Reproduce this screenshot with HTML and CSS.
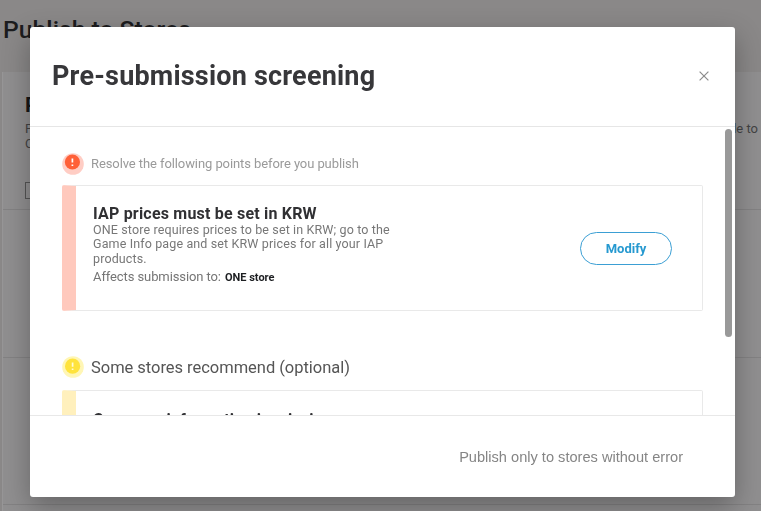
FILE: index.html
```html
<!DOCTYPE html>
<html lang="en">
<head>
<meta charset="utf-8">
<title>Publish to Stores</title>
<link rel="stylesheet" href="styles.css">
</head>
<body>
<main class="page">
  <h1 class="page-title">Publish to Stores</h1>
  <div class="panel">
    <section class="intro">
      <h2>Publish</h2>
      <div class="intro-copy"><span>Publish<br>Choose</span><span>le to</span></div>
      <span class="checkbox"></span>
    </section>
    <section class="row"></section>
    <section class="row"></section>
    <section class="row last"></section>
  </div>
</main>
<div class="modal" role="dialog" aria-label="Pre-submission screening">
  <header class="modal-header">
    <h2 class="modal-title"><span>Pre-submission screening</span></h2>
    <svg class="close" viewBox="0 0 10 10"><path d="M.6.6l8.8 8.8M9.4.6L.6 9.4"/></svg>
  </header>
  <div class="modal-body">
    <div class="content">
      <div class="notice">
        <svg class="status" viewBox="0 0 22 22"><circle class="halo-error" cx="11" cy="11" r="10.8"/><circle class="dot-error" cx="10.4" cy="9" r="7.6"/><path class="mark" d="M10.4 5.4v4.2M10.4 11.4v1.5"/></svg>
        <span class="notice-error">Resolve the following points before you publish</span>
      </div>
      <article class="card card-error">
        <div class="card-text">
          <h3><span>IAP prices must be set in KRW</span></h3>
          <p class="details">ONE store requires prices to be set in KRW; go to the<br>Game Info page and set KRW prices for all your IAP<br>products.</p>
          <p class="affects"><span>Affects submission to:</span><b>ONE store</b></p>
        </div>
        <button class="modify">Modify</button>
      </article>
      <div class="notice">
        <svg class="status" viewBox="0 0 22 22"><circle class="halo-warning" cx="11" cy="11" r="10.8"/><circle class="dot-warning" cx="10.6" cy="10.2" r="7.6"/><path class="mark soft" d="M10.6 6.6v4.2M10.6 12.6v1.5"/></svg>
        <span class="notice-warning">Some stores recommend (optional)</span>
      </div>
      <article class="card card-warning">
        <div class="card-text"><h3><span>Company information is missing</span></h3></div>
      </article>
    </div>
    <div class="scrollbar"></div>
  </div>
  <footer class="modal-footer"><span>Publish only to stores without error</span></footer>
</div>
</body>
</html>
```

FILE: styles.css
```css
* { box-sizing: border-box; }
body, h1, h2, h3, p { margin: 0; }
body {
  height: 511px;
  overflow: hidden;
  background: #8a8888;
  font-family: Roboto, sans-serif;
  color: #757575;
}
.page { padding: 13px 0 0 2px; }
.page-title {
  height: 59px;
  padding-left: 1px;
  font-size: 24.7px;
  line-height: 33px;
  font-weight: 500;
  color: #1c1c1e;
  white-space: nowrap;
}
.panel { background: #908f90; border-left: 1px solid #979697; }
.intro {
  height: 138px;
  padding: 20px 3px 0 22px;
  border-bottom: 1px solid #838283;
}
.intro h2 {
  font-size: 21px;
  line-height: 26px;
  font-weight: 700;
  color: #171719;
}
.intro-copy {
  display: flex;
  justify-content: space-between;
  margin-top: 3px;
  font-size: 13px;
  line-height: 15px;
  color: #434344;
}
.checkbox {
  display: block;
  width: 16px;
  height: 17px;
  margin-top: 31px;
  border: 1px solid #555;
}
.row { height: 147.5px; border-bottom: 1px solid #838283; }
.row.last { height: 8px; }

.modal {
  position: fixed;
  left: 30px;
  top: 27px;
  width: 705px;
  height: 470px;
  display: flex;
  flex-direction: column;
  border-radius: 3px;
  background: #fff;
  box-shadow: 0 10px 28px rgba(0, 0, 0, .3);
}
.modal-header {
  height: 100px;
  display: flex;
  align-items: center;
  justify-content: space-between;
  padding: 0 26px 1px 22px;
  border-bottom: 1px solid #e6e6e6;
}
.modal-title {
  font-size: 27px;
  line-height: 32px;
  font-weight: 700;
  letter-spacing: .2px;
  color: #37373a;
}
.close {
  width: 10px;
  height: 10px;
  fill: none;
  stroke: #8c8c8c;
  stroke-width: 1.2;
}
.modal-body {
  height: 289px;
  display: flex;
  justify-content: space-between;
  padding: 2px 3px 0 32px;
  overflow: hidden;
  border-bottom: 1px solid #e8e8e8;
}
.content { width: 641px; padding-top: 24px; }
.notice { height: 22px; display: flex; align-items: center; gap: 7px; }
.status { width: 22px; height: 22px; }
.halo-error { fill: #ffcdc4; }
.dot-error { fill: #ff6038; }
.halo-warning { fill: #fff6b5; }
.dot-warning { fill: #ffe33c; }
.mark { stroke: #fff; stroke-width: 1.7; }
.soft { stroke: #fffbd8; }
.notice-error {
  padding-bottom: 1px;
  font-size: 13px;
  letter-spacing: -.09px;
  color: #9a9a9a;
}
.notice-warning { font-size: 16.5px; letter-spacing: -.03px; color: #555; }
.card {
  display: flex;
  align-items: center;
  justify-content: space-between;
  height: 126px;
  margin: 10px 0 45px;
  padding-right: 30px;
  border: 1px solid #e9e9e9;
  border-left: 14px solid #ffc9bd;
  border-radius: 2px;
}
.card-warning { margin: 12px 0 0; border-left-color: #fff0bd; }
.card-text { align-self: flex-start; padding: 18px 0 0 17px; }
.card-warning .card-text { padding-top: 19px; }
.card h3 {
  font-size: 16px;
  line-height: 19px;
  font-weight: 700;
  letter-spacing: .2px;
  color: #303033;
}
.details {
  font-size: 12.5px;
  line-height: 14.3px;
  letter-spacing: .13px;
  color: #777;
}
.affects {
  display: flex;
  align-items: baseline;
  gap: 4px;
  margin-top: 3px;
  font-size: 13px;
  line-height: 16px;
  letter-spacing: -.1px;
}
.affects b { font-size: 11px; letter-spacing: 0; color: #1d1f22; }
.modify {
  width: 92px;
  height: 33px;
  margin-top: 1px;
  padding: 0;
  border: 1px solid #3b9fd4;
  border-radius: 17px;
  background: #fff;
  color: #2699d0;
  font: 700 13px Roboto, sans-serif;
}
.scrollbar { width: 7px; height: 208px; border-radius: 4px; background: #999; }
.modal-footer {
  flex: 1;
  display: flex;
  align-items: center;
  justify-content: flex-end;
  padding: 0 52px 0 0;
  font: 14.6px "Liberation Sans", sans-serif;
  color: #858585;
}
```
